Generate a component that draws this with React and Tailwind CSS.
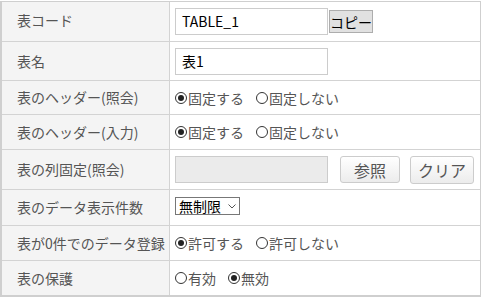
const font = { fontFamily: '"Noto Sans CJK JP", "Noto Sans", sans-serif' };

function Radio({ checked, label }) {
    return (
        <span className="inline-flex items-center text-[14px] text-[#555] leading-none">
            <span className="w-[12px] h-[12px] rounded-full border border-[#333] flex items-center justify-center bg-white">
                {checked && <span className="w-[6px] h-[6px] rounded-full bg-[#222]" />}
            </span>
            <span className="ml-px">{label}</span>
        </span>
    );
}

function Row({ label, h, last, labelClass = '', children }) {
    return (
        <div className={`flex ${h} ${last ? '' : 'border-b border-[#d3d3d3]'}`}>
            <div className={`w-[168px] shrink-0 bg-[#f4f4f4] border-r border-[#d3d3d3] flex items-center pl-[15px] text-[14px] text-[#555] ${labelClass}`}>
                {label}
            </div>
            <div className="flex-1 flex items-center pl-[5px] bg-white">{children}</div>
        </div>
    );
}

export default function App() {
    return (
        <div className="bg-white w-[482px] h-[297px] pt-px" style={font}>
            <div className="w-[481px] border-l-2 border-t border-r border-b-2 border-[#cfcfcf]">
                <Row label="表コード" h="h-[40px]" labelClass="pb-[3px]">
                    <div className="w-[153px] h-[27px] border border-[#ccc] flex items-center pl-[6px] text-[14px] text-black">
                        TABLE_1
                    </div>
                    <button className="ml-px h-[23px] w-[44px] whitespace-nowrap bg-[#e1e1e1] border border-[#adadad] text-[14px] text-black leading-none flex items-center justify-center">
                        コピー
                    </button>
                </Row>
                <Row label="表名" h="h-[39px]">
                    <div className="w-[153px] h-[27px] border border-[#ccc] flex items-center pl-[6px] text-[14px] text-black">
                        表1
                    </div>
                </Row>
                <Row label="表のヘッダー(照会)" h="h-[34px]">
                    <div className="flex items-center gap-[12px]">
                        <Radio checked label="固定する" />
                        <Radio label="固定しない" />
                    </div>
                </Row>
                <Row label="表のヘッダー(入力)" h="h-[35px]">
                    <div className="flex items-center gap-[12px]">
                        <Radio checked label="固定する" />
                        <Radio label="固定しない" />
                    </div>
                </Row>
                <Row label="表の列固定(照会)" h="h-[40px]">
                    <div className="w-[153px] h-[27px] border border-[#ccc] bg-[#ebebeb]" />
                    <button className="ml-[12px] w-[60px] h-[27px] rounded-[3px] border border-[#ccc] bg-gradient-to-b from-white to-[#ececec] text-[16px] text-[#555] leading-none flex items-center justify-center">
                        参照
                    </button>
                    <button className="ml-[10px] w-[64px] h-[28px] rounded-[3px] border border-[#ccc] bg-gradient-to-b from-white to-[#ececec] text-[16px] text-[#555] leading-none flex items-center justify-center">
                        クリア
                    </button>
                </Row>
                <Row label="表のデータ表示件数" h="h-[36px]">
                    <div className="w-[65px] h-[18px] border border-[#777] flex items-center pl-[3px] text-[14px] text-black leading-none mb-[3px]">
                        <span>無制限</span>
                        <svg className="ml-[7px]" width="8" height="5" viewBox="0 0 8 5">
                            <path d="M0.5 0.5 L4 4 L7.5 0.5" fill="none" stroke="#555" strokeWidth="1" />
                        </svg>
                    </div>
                </Row>
                <Row label="表が0件でのデータ登録" h="h-[35px]">
                    <div className="flex items-center gap-[12px]">
                        <Radio checked label="許可する" />
                        <Radio label="許可しない" />
                    </div>
                </Row>
                <Row label="表の保護" h="h-[34px]" last>
                    <div className="flex items-center gap-[12px]">
                        <Radio label="有効" />
                        <Radio checked label="無効" />
                    </div>
                </Row>
            </div>
        </div>
    );
}
